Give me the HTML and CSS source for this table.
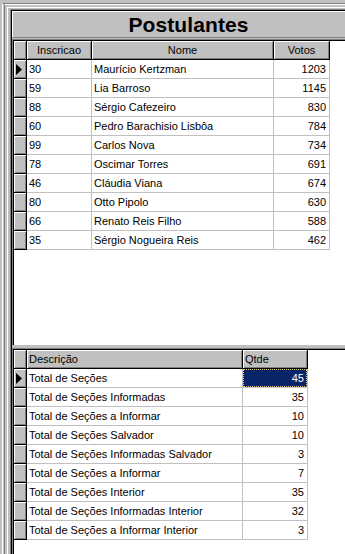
FILE: index.html
```html
<!DOCTYPE html>
<html lang="pt">
<head>
<meta charset="utf-8">
<title>Postulantes</title>
<link rel="stylesheet" href="styles.css">
</head>
<body>
<div class="f1"><div class="f2"><div class="f3"><div class="f4"><div class="f5">
  <div class="title">Postulantes</div>
  <div class="area top-area"><div class="area-in">
    <div class="grid grid-top">
      <div class="hc ind"></div><div class="hc center">Inscricao</div><div class="hc center">Nome</div><div class="hc center">Votos</div>

      <div class="ic"><svg class="arrow" width="6" height="11" viewBox="0 0 6 11"><polygon points="0,0 6,5.5 0,11" fill="#000"/></svg></div><div class="dc">30</div><div class="dc">Maurício Kertzman</div><div class="dc num">1203</div>
      <div class="ic"></div><div class="dc">59</div><div class="dc">Lia Barroso</div><div class="dc num">1145</div>
      <div class="ic"></div><div class="dc">88</div><div class="dc">Sérgio Cafezeiro</div><div class="dc num">830</div>
      <div class="ic"></div><div class="dc">60</div><div class="dc">Pedro Barachisio Lisbôa</div><div class="dc num">784</div>
      <div class="ic"></div><div class="dc">99</div><div class="dc">Carlos Nova</div><div class="dc num">734</div>
      <div class="ic"></div><div class="dc">78</div><div class="dc">Oscimar Torres</div><div class="dc num">691</div>
      <div class="ic"></div><div class="dc">46</div><div class="dc">Cláudia Viana</div><div class="dc num">674</div>
      <div class="ic"></div><div class="dc">80</div><div class="dc">Otto Pipolo</div><div class="dc num">630</div>
      <div class="ic"></div><div class="dc">66</div><div class="dc">Renato Reis Filho</div><div class="dc num">588</div>
      <div class="ic"></div><div class="dc">35</div><div class="dc">Sérgio Nogueira Reis</div><div class="dc num">462</div>
    </div>
  </div></div>
  <div class="splitter"></div>
  <div class="area bottom-area"><div class="area-in">
    <div class="grid grid-bottom">
      <div class="hc ind"></div><div class="hc">Descrição</div><div class="hc">Qtde</div>

      <div class="ic"><svg class="arrow" width="6" height="11" viewBox="0 0 6 11"><polygon points="0,0 6,5.5 0,11" fill="#000"/></svg></div><div class="dc">Total de Seções</div><div class="dc num sel"><span class="sel-in">45</span></div>
      <div class="ic"></div><div class="dc">Total de Seções Informadas</div><div class="dc num">35</div>
      <div class="ic"></div><div class="dc">Total de Seções a Informar</div><div class="dc num">10</div>
      <div class="ic"></div><div class="dc">Total de Seções Salvador</div><div class="dc num">10</div>
      <div class="ic"></div><div class="dc">Total de Seções Informadas Salvador</div><div class="dc num">3</div>
      <div class="ic"></div><div class="dc">Total de Seções a Informar</div><div class="dc num">7</div>
      <div class="ic"></div><div class="dc">Total de Seções Interior</div><div class="dc num">35</div>
      <div class="ic"></div><div class="dc">Total de Seções Informadas Interior</div><div class="dc num">32</div>
      <div class="ic"></div><div class="dc">Total de Seções a Informar Interior</div><div class="dc num">3</div>
    </div>
  </div></div>
</div></div></div></div></div>
</body>
</html>
```
FILE: styles.css
```css
html, body {
  margin: 0;
  padding: 0;
  height: 554px;
  overflow: hidden;
  background: #c0c0c0;
  font-family: "Liberation Sans", Arial, sans-serif;
  font-size: 11px;
  color: #000;
}
*, *::before, *::after { box-sizing: border-box; }

.f1 {
  margin: 3px 0 0 2px;
  height: 551px;
  border-top: 1px solid #808080;
  border-left: 1px solid #ffffff;
  padding-left: 1px;
  display: flex;
  flex-direction: column;
}
.f2 {
  flex: 1;
  border-top: 1px solid #ffffff;
  border-left: 1px solid #808080;
  padding: 2px 0 0 2px;
  display: flex;
  flex-direction: column;
}
.f3 {
  flex: 1;
  border-top: 1px solid #ffffff;
  border-left: 1px solid #ffffff;
  padding: 1px 0 0 2px;
  display: flex;
  flex-direction: column;
}
.f4 {
  flex: 1;
  border-top: 1px solid #808080;
  border-left: 1px solid #808080;
  display: flex;
  flex-direction: column;
}
.f5 {
  flex: 1;
  border-top: 1px solid #000;
  border-left: 1px solid #000;
  display: flex;
  flex-direction: column;
  min-height: 0;
}

.title {
  height: 27px;
  border-top: 1px solid #fff;
  border-left: 1px solid #fff;
  border-bottom: 1px solid #808080;
  margin-bottom: 1px;
  padding-left: 19px;
  font-size: 21px;
  font-weight: bold;
  line-height: 25px;
  text-align: center;
  letter-spacing: 0.1px;
}

.area {
  background: #fff;
  border-top: 1px solid #808080;
  border-left: 1px solid #808080;
  display: flex;
  flex-direction: column;
}
.area-in {
  flex: 1;
  border-top: 1px solid #000;
  border-left: 1px solid #000;
}
.top-area { height: 306px; }
.bottom-area { flex: 1; }

.splitter { height: 3px; }

.grid {
  display: grid;
  grid-auto-rows: 19px;
}
.grid-top { grid-template-columns: 13px 65px 182px 56px; }
.grid-bottom { grid-template-columns: 13px 216px 65px; }

.hc, .ic {
  background: #c0c0c0;
  border-right: 1px solid #000;
  border-bottom: 1px solid #000;
  box-shadow: inset 1px 1px 0 #fff, inset -1px -1px 0 #808080;
}
.hc {
  line-height: 18px;
  padding-left: 2px;
  white-space: nowrap;
  overflow: hidden;
}
.hc.center { text-align: center; padding-left: 0; }

.ic {
  display: flex;
  align-items: center;
  padding-left: 2px;
}
.arrow { display: block; }

.dc {
  border-right: 1px solid #c0c0c0;
  border-bottom: 1px solid #c0c0c0;
  line-height: 18px;
  padding: 0 3px 0 2px;
  white-space: nowrap;
  overflow: hidden;
}
.dc.num { text-align: right; }

.dc.sel { padding: 0; }
.sel-in {
  display: block;
  height: 18px;
  background: #0a246a;
  color: #fff;
  border: 1px dotted #d8c878;
  line-height: 16px;
  padding-right: 2px;
}
```
